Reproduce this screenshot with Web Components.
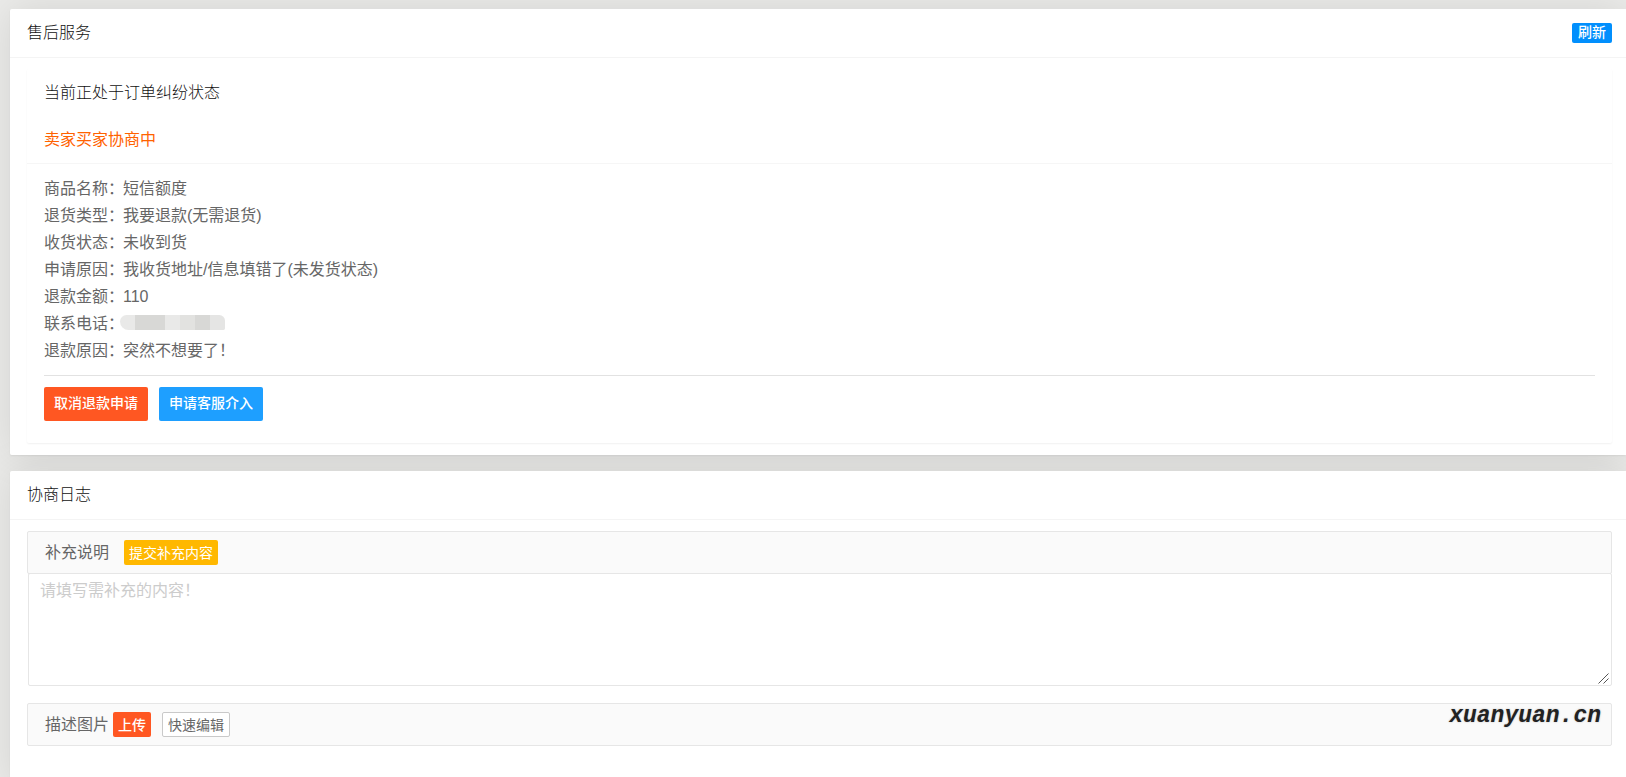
<!DOCTYPE html>
<html lang="zh-CN">
<head>
<meta charset="utf-8">
<title>售后服务</title>
<style>
html, body { margin: 0; }
body {
  background: #ebebe9;
  color: #666;
  font: 16px/27px "Liberation Sans", "Noto Sans CJK SC", sans-serif;
  height: 100vh;
  overflow: hidden;
}
</style>
</head>
<body>
<after-sale-page></after-sale-page>
<script>
class BaseElement extends HTMLElement {
  constructor() {
    super();
    this.attachShadow({ mode: 'open' }).innerHTML =
      '<style>*{box-sizing:border-box}</style>' + this.constructor.markup;
  }
}

class UiCard extends BaseElement {
  static markup = `
  <style>
    :host { display: block; position: relative; background: #fff; border-radius: 2px 0 0 2px; }
    :host::before {
      content: ""; position: absolute; inset: 0; z-index: -1; border-radius: 2px;
      box-shadow: 0 1px 2px rgba(0,0,0,.06), 0 0 40px rgba(0,0,0,.1);
    }
    header {
      display: flex; align-items: center; justify-content: space-between;
      height: 49px; padding: 0 14px 0 17px; border-bottom: 1px solid #f4f4f4;
    }
    h2 { margin: 0; font-size: 16px; font-weight: 300; line-height: 24px; color: #111; }
    .body { padding: 11px 14px 12px 17px; }
  </style>
  <header><h2><slot name="title"></slot></h2><slot name="action"></slot></header>
  <div class="body"><slot></slot></div>`;
}
customElements.define('ui-card', UiCard);

class UiButton extends BaseElement {
  static markup = `
  <style>
    :host { display: block; flex: none; }
    button {
      display: block; margin: 0; border: 0; border-radius: 2px; color: #fff; background: #1e9fff;
      font: 14px/20px "Liberation Sans", "Noto Sans CJK SC", sans-serif;
      height: 34px; padding: 0 10px 2px; white-space: nowrap; cursor: pointer;
    }
    :host([tone=danger]) button { background: #ff5722; }
    :host([tone=warm]) button { background: #ffb800; }
    :host([size=small]) button { height: 25px; padding: 0 5px; }
    :host([size=mini]) button { height: 20px; padding: 0 6px 2px; line-height: 18px; background: #018ffd; }
    :host([tone=plain]) button { background: #fff; color: #666; border: 1px solid #c9c9c9; padding: 0 5px; }
    :host([strong]) button { font-weight: 500; }
  </style>
  <button type="button"><slot></slot></button>`;
}
customElements.define('ui-button', UiButton);

class DisputePanel extends BaseElement {
  static markup = `
  <style>
    :host { display: block; border-radius: 2px; box-shadow: 0 1px 2px rgba(0,0,0,.06); }
    .status { padding: 10px 17px 10px; border-bottom: 1px solid #f6f6f6; }
    .status p { margin: 0; line-height: 27px; font-weight: 300; color: #111; }
    .status p + p { margin-top: 20px; color: #ff6200; font-weight: 400; }
    .detail { padding: 11px 17px 22px 17px; }
    dl { margin: 0; }
    dl div { display: flex; height: 27px; }
    dt { width: 79px; flex: none; white-space: nowrap; }
    dd { margin: 0; }
    .masked {
      width: 105px; height: 15px; margin: 5px 0 0 -3px; border-radius: 9px 8px 2px 12px;
      background: linear-gradient(90deg, #e9e9e8 0 15px, #d8d8d6 15px 45px, #e9e9e8 45px 60px, #e2e2e0 60px 75px, #d8d8d6 75px 90px, #e5e5e4 90px);
    }
    hr { margin: 11px 0 11px; border: 0; border-top: 1px solid #e2e2e2; }
    .actions { display: flex; gap: 11px; }
  </style>
  <div class="status"><p>当前正处于订单纠纷状态</p><p>卖家买家协商中</p></div>
  <div class="detail">
    <dl>
      <div><dt>商品名称：</dt><dd>短信额度</dd></div>
      <div><dt>退货类型：</dt><dd>我要退款(无需退货)</dd></div>
      <div><dt>收货状态：</dt><dd>未收到货</dd></div>
      <div><dt>申请原因：</dt><dd>我收货地址/信息填错了(未发货状态)</dd></div>
      <div><dt>退款金额：</dt><dd>110</dd></div>
      <div><dt>联系电话：</dt><dd class="masked"></dd></div>
      <div><dt>退款原因：</dt><dd>突然不想要了！</dd></div>
    </dl>
    <hr>
    <div class="actions">
      <ui-button tone="danger" strong>取消退款申请</ui-button>
      <ui-button strong>申请客服介入</ui-button>
    </div>
  </div>`;
}
customElements.define('dispute-panel', DisputePanel);

class SupplementForm extends BaseElement {
  static markup = `
  <style>
    :host { display: block; }
    .bar {
      display: flex; align-items: center; height: 43px; padding: 0 17px;
      border: 1px solid #e6e6e6; border-radius: 2px; background: #fafafa;
    }
    .text { gap: 15px; }
    .pics { margin-top: 17px; gap: 11px; position: relative; }
    .upload { display: flex; align-items: center; gap: 4px; }
    textarea {
      display: block; width: calc(100% - 1px); height: 113px; margin: -1px 0 0 1px; padding: 5px 11px;
      border: 1px solid #e6e6e6; border-radius: 2px; background: #fff; color: #333; resize: vertical;
      font: 16px/24px "Liberation Sans", "Noto Sans CJK SC", sans-serif; outline: none;
    }
    textarea::placeholder { color: #ccc; opacity: 1; }
    textarea::-webkit-resizer {
      background: url("data:image/svg+xml,%3Csvg xmlns='http://www.w3.org/2000/svg' width='15' height='15'%3E%3Cpath d='M2.5 13.5l10-10M7.5 13.5l5-5' stroke='%23555' fill='none'/%3E%3C/svg%3E") no-repeat right bottom;
    }
    .mark {
      position: absolute; right: 10px; top: -1px;
      font: italic bold 23px/26px "Liberation Mono", monospace; color: #222;
      text-shadow: 0 0 2px #bbb;
    }
  </style>
  <div class="bar text"><label for="note">补充说明</label><ui-button tone="warm" size="small">提交补充内容</ui-button></div>
  <textarea id="note" placeholder="请填写需补充的内容！"></textarea>
  <div class="bar pics">
    <div class="upload"><span>描述图片</span><ui-button tone="danger" size="small" strong>上传</ui-button></div>
    <ui-button tone="plain" size="small">快速编辑</ui-button>
    <span class="mark">xuanyuan.cn</span>
  </div>`;
}
customElements.define('supplement-form', SupplementForm);

class AfterSalePage extends BaseElement {
  static markup = `
  <style>
    :host { display: flex; flex-direction: column; gap: 16px; min-height: 100vh; padding: 9px 0 0 10px; isolation: isolate; }
    .log { flex: 1 0 auto; }
  </style>
  <ui-card>
    <span slot="title">售后服务</span>
    <ui-button slot="action" size="mini" strong>刷新</ui-button>
    <dispute-panel></dispute-panel>
  </ui-card>
  <ui-card class="log">
    <span slot="title">协商日志</span>
    <supplement-form></supplement-form>
  </ui-card>`;
}
customElements.define('after-sale-page', AfterSalePage);
</script>
</body>
</html>
